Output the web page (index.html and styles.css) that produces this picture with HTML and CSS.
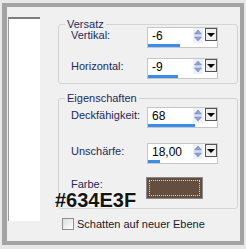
FILE: index.html
```html
<!DOCTYPE html>
<html lang="de">
<head>
    <meta charset="UTF-8">
    <title>Schatten</title>
    <link rel="stylesheet" href="styles.css">
</head>
<body>
<div class="frame">
    <div class="preview"></div>
    <div class="panel">
        <div class="group group-offset">
            <div class="group-title">Versatz</div>
            <div class="row">
                <span class="label">Vertikal:</span>
                <div class="spin">
                    <div class="spin-top">
                        <span class="value">-6</span>
                        <svg class="arrows" width="10" height="15" viewBox="0 0 10 15">
                            <rect x="0" y="0" width="10" height="15" fill="#edf0f6"/>
                            <polygon points="5,2 8.5,6 1.5,6" fill="#8ea2d6" stroke="#6d84c2" stroke-width="0.6"/>
                            <line x1="1" y1="7.5" x2="9" y2="7.5" stroke="#d4dae8"/>
                            <polygon points="1.5,9 8.5,9 5,13" fill="#8ea2d6" stroke="#6d84c2" stroke-width="0.6"/>
                        </svg>
                        <span class="drop"></span>
                    </div>
                    <div class="bar" style="width: 32px"></div>
                </div>
            </div>
            <div class="row row-next">
                <span class="label">Horizontal:</span>
                <div class="spin">
                    <div class="spin-top">
                        <span class="value">-9</span>
                        <svg class="arrows" width="10" height="15" viewBox="0 0 10 15">
                            <rect x="0" y="0" width="10" height="15" fill="#edf0f6"/>
                            <polygon points="5,2 8.5,6 1.5,6" fill="#8ea2d6" stroke="#6d84c2" stroke-width="0.6"/>
                            <line x1="1" y1="7.5" x2="9" y2="7.5" stroke="#d4dae8"/>
                            <polygon points="1.5,9 8.5,9 5,13" fill="#8ea2d6" stroke="#6d84c2" stroke-width="0.6"/>
                        </svg>
                        <span class="drop"></span>
                    </div>
                    <div class="bar" style="width: 30px"></div>
                </div>
            </div>
        </div>

        <div class="group group-props">
            <div class="group-title">Eigenschaften</div>
            <div class="row row-first">
                <span class="label">Deckfähigkeit:</span>
                <div class="spin">
                    <div class="spin-top">
                        <span class="value">68</span>
                        <svg class="arrows" width="10" height="15" viewBox="0 0 10 15">
                            <rect x="0" y="0" width="10" height="15" fill="#edf0f6"/>
                            <polygon points="5,2 8.5,6 1.5,6" fill="#8ea2d6" stroke="#6d84c2" stroke-width="0.6"/>
                            <line x1="1" y1="7.5" x2="9" y2="7.5" stroke="#d4dae8"/>
                            <polygon points="1.5,9 8.5,9 5,13" fill="#8ea2d6" stroke="#6d84c2" stroke-width="0.6"/>
                        </svg>
                        <span class="drop"></span>
                    </div>
                    <div class="bar" style="width: 47px"></div>
                </div>
            </div>
            <div class="row row-blur">
                <span class="label">Unschärfe:</span>
                <div class="spin">
                    <div class="spin-top">
                        <span class="value">18,00</span>
                        <svg class="arrows" width="10" height="15" viewBox="0 0 10 15">
                            <rect x="0" y="0" width="10" height="15" fill="#edf0f6"/>
                            <polygon points="5,2 8.5,6 1.5,6" fill="#8ea2d6" stroke="#6d84c2" stroke-width="0.6"/>
                            <line x1="1" y1="7.5" x2="9" y2="7.5" stroke="#d4dae8"/>
                            <polygon points="1.5,9 8.5,9 5,13" fill="#8ea2d6" stroke="#6d84c2" stroke-width="0.6"/>
                        </svg>
                        <span class="drop"></span>
                    </div>
                    <div class="bar" style="width: 12px"></div>
                </div>
            </div>
            <div class="row row-color">
                <span class="label label-color">Farbe:</span>
                <div class="swatch"><div class="swatch-focus"></div></div>
            </div>
            <div class="hex">#634E3F</div>
        </div>

        <label class="check">
            <span class="check-box"></span>
            Schatten auf neuer Ebene
        </label>
    </div>
</div>
</body>
</html>
```

FILE: styles.css
```css
body {
    margin: 0;
    background: #e8e8e8;
    font-family: 'Liberation Sans', Arial, sans-serif;
    font-size: 11px;
}
.frame {
    margin: 3px 2px 0 2px;
    height: 234px;
    border-style: solid;
    border-color: #a3a3a3;
    border-width: 4px 4px 4px 5px;
    background: #f0f0f0;
    display: flex;
    align-items: flex-start;
}
.preview {
    margin: 10px 0 0 1px;
    width: 31px;
    height: 202px;
    background: #fff;
    border-top: 2px solid #7d7d7d;
    border-left: 1px solid #9a9a9a;
}
.panel {
    margin-left: 18px;
    width: 180px;
}
.group {
    border: 1px solid #d4d4d4;
    border-radius: 3px;
    padding: 0 0 4px 12px;
    margin-top: 17px;
}
.group-props {
    position: relative;
    margin-top: 14px;
    padding-bottom: 9px;
}
.group-title {
    width: fit-content;
    margin: -8px 0 -4px -6px;
    padding: 0 2px;
    height: 14px;
    line-height: 14px;
    background: #f0f0f0;
    color: #1c2b5a;
}
.row {
    display: flex;
    align-items: flex-start;
}
.row-next {
    margin-top: 10px;
}
.row-first {
    margin-top: 6px;
}
.row-blur {
    margin-top: 15px;
}
.row-color {
    margin-top: 13px;
}
.label {
    width: 76px;
    flex: none;
    line-height: 17px;
    color: #1c2b5a;
}
.label-color {
    width: 75px;
    line-height: 14px;
}
.spin {
    width: 71px;
    height: 21px;
    box-sizing: border-box;
    border: 1px solid #c6c6c6;
    background: #fff;
    display: flex;
    flex-direction: column;
}
.spin-top {
    height: 16px;
    display: flex;
    align-items: flex-start;
}
.value {
    flex: 1;
    padding-left: 4px;
    line-height: 16px;
    font-size: 12px;
    color: #000;
}
.arrows {
    flex: none;
    margin-right: 2px;
}
.drop {
    width: 12px;
    height: 13px;
    box-sizing: border-box;
    border: 1px solid #555;
    background: #efefef;
    display: flex;
    align-items: center;
    justify-content: center;
}
.drop::after {
    content: '';
    border-left: 4px solid transparent;
    border-right: 4px solid transparent;
    border-top: 4px solid #000;
}
.bar {
    height: 3px;
    margin-top: auto;
    background: #3a8ee6;
}
.swatch {
    width: 57px;
    height: 22px;
    box-sizing: border-box;
    border: 1px solid #8a8a8a;
    background: #634e3f;
    padding: 2px;
}
.swatch-focus {
    height: 100%;
    box-sizing: border-box;
    border: 1px dotted #d9d0c6;
}
.hex {
    position: absolute;
    left: -4px;
    top: 91px;
    font-size: 20px;
    line-height: 20px;
    font-weight: bold;
    color: #141414;
    text-shadow: 0 0 2px #fff, 0 0 2px #fff;
}
.check {
    display: flex;
    align-items: center;
    gap: 3px;
    margin: 9px 0 0 4px;
    line-height: 12px;
    color: #1a1a2a;
}
.check-box {
    width: 12px;
    height: 12px;
    box-sizing: border-box;
    border: 1px solid #8e8f8f;
    background: linear-gradient(135deg, #dcdcdc, #fff);
}
```
